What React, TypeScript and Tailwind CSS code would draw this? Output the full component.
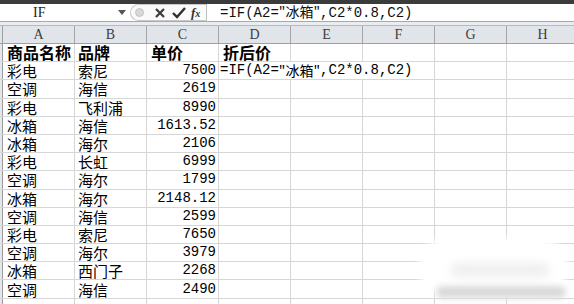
const cols = ["A", "B", "C", "D", "E", "F", "G", "H"];

const rows: [string, string, string][] = [
  ["彩电", "索尼", "7500"],
  ["空调", "海信", "2619"],
  ["彩电", "飞利浦", "8990"],
  ["冰箱", "海信", "1613.52"],
  ["冰箱", "海尔", "2106"],
  ["彩电", "长虹", "6999"],
  ["空调", "海尔", "1799"],
  ["冰箱", "海尔", "2148.12"],
  ["空调", "海信", "2599"],
  ["彩电", "索尼", "7650"],
  ["空调", "海尔", "3979"],
  ["冰箱", "西门子", "2268"],
  ["空调", "海信", "2490"],
];

const cjk = "font-['Noto_Sans_CJK_SC',sans-serif]";
const mono = "font-['Liberation_Mono','Noto_Sans_CJK_SC',monospace]";

function Stub() {
  return <div className="w-[3px] shrink-0 bg-[#e3e7ec] border-r border-[#9c9c9c]" />;
}

function Cell({ children, className = "" }: { children?: React.ReactNode; className?: string }) {
  return (
    <div className={`w-[72px] shrink-0 h-full border-r border-[#d6d6d6] flex items-center whitespace-nowrap overflow-hidden leading-[17px] ${className}`}>
      {children}
    </div>
  );
}

function FormulaBar() {
  return (
    <div className="h-[18px] flex items-center bg-white border-b border-[#a8a8a8]">
      <div className="w-[118px] pl-[33px] text-[14px] leading-[17px] text-[#222] font-['Liberation_Serif',serif]">IF</div>
      <svg width="8" height="5" viewBox="0 0 8 5">
        <path d="M0 0 L8 0 L4 5 Z" fill="#555" />
      </svg>
      <div className="ml-[4px] h-[17px] w-[76px] flex items-center rounded-l-full border-l border-y border-[#c9c9c9] bg-[#fafafa] pl-[4px]">
        <div className="w-[9px] h-[9px] rounded-full bg-[#d8d8d8] border border-[#c4c4c4]" />
        <svg width="12" height="12" viewBox="0 0 12 12" className="ml-[10px]">
          <path d="M2 2 L10 10 M10 2 L2 10" stroke="#3a3a3a" strokeWidth="2.2" />
        </svg>
        <svg width="14" height="12" viewBox="0 0 14 12" className="ml-[6px]">
          <path d="M1 6 L5 10 L13 1" stroke="#2e2e2e" strokeWidth="2.4" fill="none" />
        </svg>
        <span className="ml-[5px] text-[13px] italic font-bold text-[#333] font-['Liberation_Serif',serif] leading-none">
          f<span className="text-[10px]">x</span>
        </span>
      </div>
      <div className="w-px h-[18px] bg-[#bdbdbd]" />
      <div className={`ml-[13px] text-[14px] leading-[17px] text-[#111] whitespace-nowrap ${mono}`}>
        =IF(A2=<span className={cjk}>"冰箱"</span>,C2*0.8,C2)
      </div>
    </div>
  );
}

export default function App() {
  return (
    <div className="relative w-[574px] h-[304px] overflow-hidden bg-white">
      <div className="h-[4px] bg-[#3b3b3b]" />
      <FormulaBar />
      <div className="h-[4px] bg-[#e9ecf0] border-b border-[#b9b9b9]" />
      <div className="h-[18px] flex bg-[#e1e5ea] border-b border-[#a0a0a0]">
        <div className="w-[3px] shrink-0 border-r border-[#a0a0a0]" />
        {cols.map((c) => (
          <div
            key={c}
            className="w-[72px] shrink-0 border-r border-[#a6a6a6] flex items-center justify-center text-[14px] leading-[17px] text-[#3d3d3d] font-['Liberation_Serif',serif]"
          >
            {c}
          </div>
        ))}
      </div>

      <div className="h-[18.2px] flex border-b border-[#d6d6d6]">
        <Stub />
        <Cell className={`pl-[4px] text-[16px] font-bold text-black ${cjk}`}>商品名称</Cell>
        <Cell className={`pl-[3px] text-[16px] font-bold text-black ${cjk}`}>品牌</Cell>
        <Cell className={`pl-[4px] text-[16px] font-bold text-black ${cjk}`}>单价</Cell>
        <Cell className={`pl-[4px] text-[16px] font-bold text-black ${cjk}`}>折后价</Cell>
        <Cell />
        <Cell />
        <Cell />
        <Cell />
      </div>

      {rows.map((r, i) => (
        <div key={i} className="h-[18.2px] flex border-b border-[#d6d6d6]">
          <Stub />
          <Cell className={`pl-[4px] text-[15px] text-black ${cjk}`}>{r[0]}</Cell>
          <Cell className={`pl-[3px] text-[15px] text-black ${cjk}`}>{r[1]}</Cell>
          <Cell className={`justify-end pr-[2px] text-[14px] text-black ${mono}`}>{r[2]}</Cell>
          {i === 0 ? (
            <div className={`w-[216px] shrink-0 h-full border-r border-[#d6d6d6] flex items-center whitespace-nowrap leading-[17px] pl-[1px] text-[14px] text-black ${mono}`}>
              =IF(A2=<span className={cjk}>"冰箱"</span>,C2*0.8,C2)
            </div>
          ) : (
            <>
              <Cell />
              <Cell />
              <Cell />
            </>
          )}
          <Cell />
          <Cell />
        </div>
      ))}
      <div className="h-[18px] flex">
        <Stub />
        {cols.map((c) => (
          <Cell key={c} />
        ))}
      </div>

      {/* blurred watermark blob, bottom right */}
      <div className="absolute left-[418px] top-[238px] w-[150px] h-[58px] rounded-[28px] bg-white blur-[3px]" />
      <div className="absolute left-[436px] top-[286px] w-[130px] h-[12px] rounded-full bg-[#d9d9d9] blur-[3px]" />
      <div className="absolute left-[450px] top-[262px] w-[100px] h-[16px] rounded-full bg-[#f1f1f1] blur-[4px]" />
    </div>
  );
}
